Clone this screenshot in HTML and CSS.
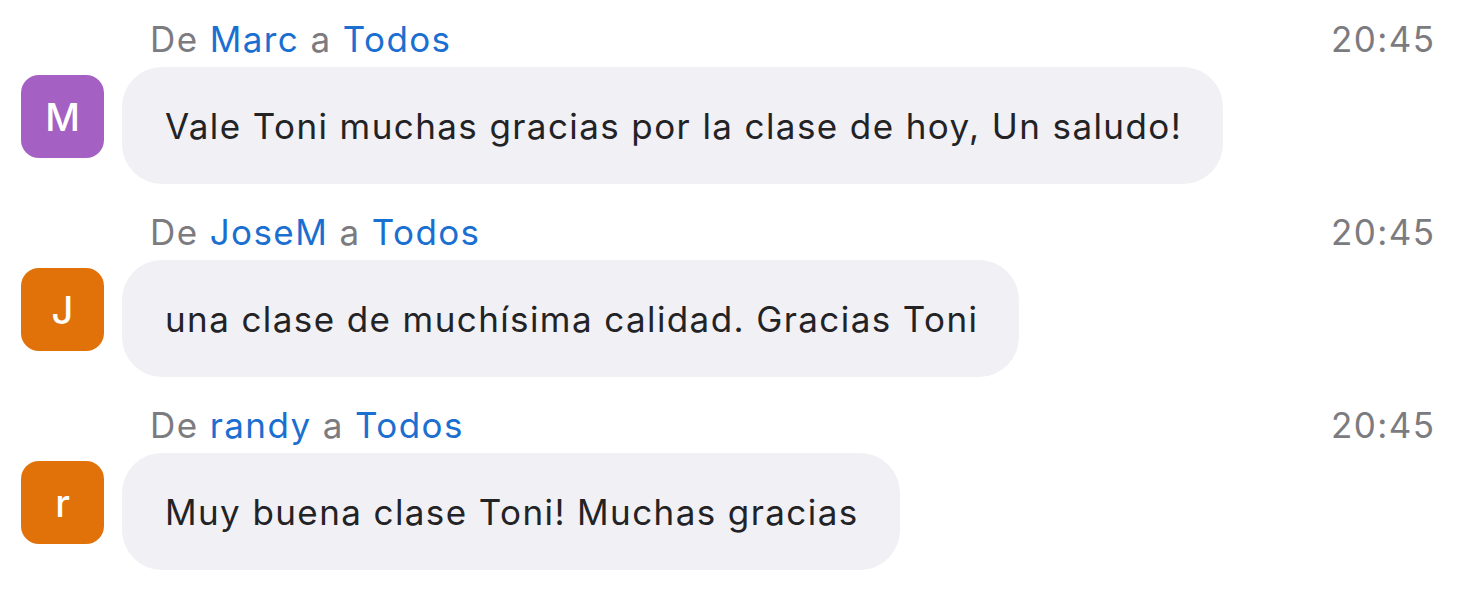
FILE: index.html
```html
<!DOCTYPE html>
<html lang="es">
<head>
<meta charset="utf-8">
<link rel="stylesheet" href="styles.css">
</head>
<body>
<div class="chat">
  <div class="msg">
    <div class="head">
      <div class="who"><span class="grey">De</span> <span class="blue">Marc</span> <span class="grey">a</span> <span class="blue">Todos</span></div>
      <div class="time">20:45</div>
    </div>
    <div class="row">
      <div class="avatar purple">M</div>
      <div class="bubble">Vale Toni muchas gracias por la clase de hoy, Un saludo!</div>
    </div>
  </div>
  <div class="msg">
    <div class="head">
      <div class="who"><span class="grey">De</span> <span class="blue">JoseM</span> <span class="grey">a</span> <span class="blue">Todos</span></div>
      <div class="time">20:45</div>
    </div>
    <div class="row">
      <div class="avatar orange">J</div>
      <div class="bubble">una clase de muchísima calidad. Gracias Toni</div>
    </div>
  </div>
  <div class="msg">
    <div class="head">
      <div class="who"><span class="grey">De</span> <span class="blue">randy</span> <span class="grey">a</span> <span class="blue">Todos</span></div>
      <div class="time">20:45</div>
    </div>
    <div class="row">
      <div class="avatar orange">r</div>
      <div class="bubble">Muy buena clase Toni! Muchas gracias</div>
    </div>
  </div>
</div>
</body>
</html>
```
FILE: styles.css
```css
html, body {
  margin: 0;
  padding: 0;
  background: #ffffff;
}
body {
  font-family: Inter, "Liberation Sans", sans-serif;
  width: 1477px;
  height: 592px;
  overflow: hidden;
}
.chat {
  display: flex;
  flex-direction: column;
  padding: 0 43px 0 21px;
}
.msg {
  height: 193px;
  display: flex;
  flex-direction: column;
}
.head {
  height: 67px;
  display: flex;
  justify-content: space-between;
  align-items: flex-end;
  padding-left: 129px;
  box-sizing: border-box;
  padding-bottom: 8px;
  font-size: 35px;
  line-height: 40px;
  letter-spacing: 1.4px;
}
.time { margin-right: -1.4px; }
.grey { color: #7b7b80; }
.blue { color: #1b6fd1; }
.time { color: #7b7b80; }
.row {
  display: flex;
  align-items: flex-start;
  gap: 18px;
}
.avatar {
  width: 83px;
  height: 83px;
  margin-top: 8px;
  border-radius: 18px;
  color: #ffffff;
  font-size: 38px;
  font-weight: 500;
  display: flex;
  align-items: center;
  justify-content: center;
  flex: none;
}
.purple { background: #a461c3; }
.orange { background: #e07209; }
.bubble {
  height: 117px;
  box-sizing: border-box;
  display: flex;
  align-items: center;
  padding: 0 41px 0 43px;
  background: #f0f0f5;
  border-radius: 40px;
  color: #232326;
  font-size: 35px;
  letter-spacing: 1.4px;
}
```
